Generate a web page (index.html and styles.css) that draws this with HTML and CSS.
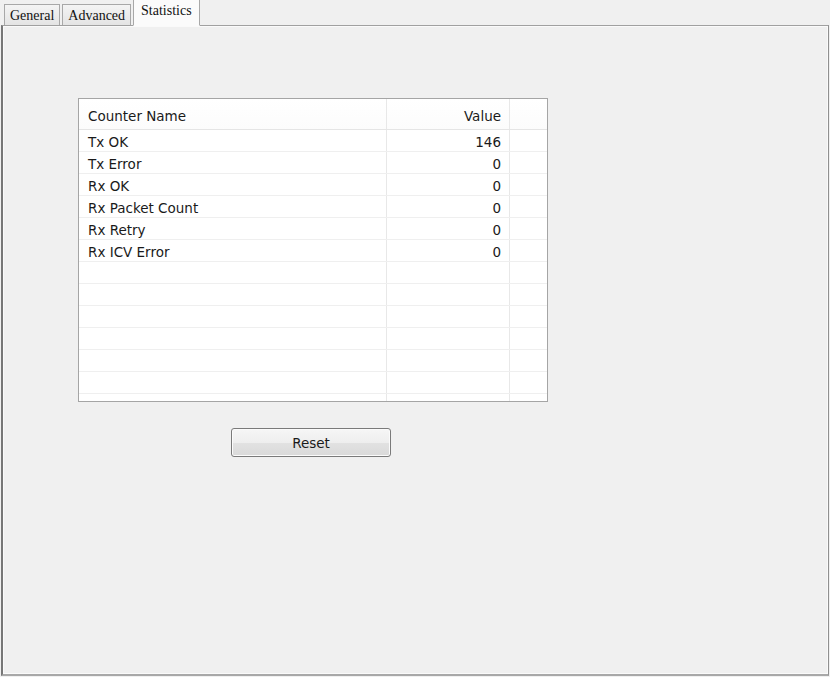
FILE: index.html
```html
<!DOCTYPE html>
<html>
<head>
<meta charset="utf-8">
<link rel="stylesheet" href="styles.css">
</head>
<body>
<div class="tabs">
  <div class="tab">General</div>
  <div class="tab">Advanced</div>
  <div class="tab active">Statistics</div>
</div>
<div class="panel">
  <div class="list">
    <div class="head">
      <div class="c1">Counter Name</div>
      <div class="c2">Value</div>
      <div class="c3"></div>
    </div>
    <div class="rows">
      <div class="row"><div class="c1">Tx OK</div><div class="c2">146</div><div class="c3"></div></div>
      <div class="row"><div class="c1">Tx Error</div><div class="c2">0</div><div class="c3"></div></div>
      <div class="row"><div class="c1">Rx OK</div><div class="c2">0</div><div class="c3"></div></div>
      <div class="row"><div class="c1">Rx Packet Count</div><div class="c2">0</div><div class="c3"></div></div>
      <div class="row"><div class="c1">Rx Retry</div><div class="c2">0</div><div class="c3"></div></div>
      <div class="row"><div class="c1">Rx ICV Error</div><div class="c2">0</div><div class="c3"></div></div>
      <div class="row"><div class="c1"></div><div class="c2"></div><div class="c3"></div></div>
      <div class="row"><div class="c1"></div><div class="c2"></div><div class="c3"></div></div>
      <div class="row"><div class="c1"></div><div class="c2"></div><div class="c3"></div></div>
      <div class="row"><div class="c1"></div><div class="c2"></div><div class="c3"></div></div>
      <div class="row"><div class="c1"></div><div class="c2"></div><div class="c3"></div></div>
      <div class="row"><div class="c1"></div><div class="c2"></div><div class="c3"></div></div>
      <div class="row"><div class="c1"></div><div class="c2"></div><div class="c3"></div></div>
    </div>
  </div>
  <div class="actions">
    <button class="btn">Reset</button>
  </div>
</div>
</body>
</html>
```
FILE: styles.css
```css
html, body {
  margin: 0;
  padding: 0;
}
body {
  width: 830px;
  height: 677px;
  background: #f0f0f0;
  overflow: hidden;
  font-family: "DejaVu Sans", sans-serif;
}
.tabs {
  display: flex;
  align-items: flex-end;
  height: 25px;
  padding-left: 4px;
  gap: 2px;
  position: relative;
  z-index: 2;
}
.tab {
  height: 20px;
  line-height: 21px;
  padding: 0 5px;
  border: 1px solid #a8a8a8;
  border-bottom: none;
  background: linear-gradient(#f4f4f4, #e4e4e4);
  font-family: "Liberation Serif", serif;
  font-size: 14px;
  color: #111;
}
.tab.active {
  height: 25px;
  line-height: 22px;
  padding: 0 7px;
  background: #fbfbfb;
  margin-bottom: -1px;
  border-bottom: 1px solid #fbfbfb;
}
.panel {
  margin: 0 1px 0 1px;
  border: 1px solid #a0a0a0;
  border-left: 2px solid #777;
  border-right: 1px solid #909090;
  border-bottom: 2px solid #a8a8a8;
  box-shadow: inset 1px 1px 0 #fafafa, inset -1px -1px 0 #fafafa;
  background: #f0f0f0;
  padding: 72px 0 0 75px;
  box-sizing: border-box;
  height: 651px;
}
.list {
  width: 470px;
  height: 304px;
  box-sizing: border-box;
  border: 1px solid #a5a5a5;
  background: #fff;
  overflow: hidden;
  font-size: 13.5px;
  color: #1a1a1a;
}
.head {
  display: flex;
  height: 31px;
  box-sizing: border-box;
  border-bottom: 1px solid #e5e5e5;
  background: linear-gradient(#ffffff, #fcfcfc);
}
.head > div {
  line-height: 34px;
}
.row {
  display: flex;
  height: 22px;
  box-sizing: border-box;
  border-bottom: 1px solid #efefef;
}
.row > div {
  line-height: 24px;
}
.c1 {
  width: 308px;
  flex: none;
  padding-left: 9px;
  box-sizing: border-box;
  border-right: 1px solid #e8e8e8;
}
.c2 {
  width: 123px;
  flex: none;
  padding-right: 8px;
  text-align: right;
  box-sizing: border-box;
  border-right: 1px solid #e8e8e8;
}
.c3 {
  flex: 1;
}
.actions {
  padding: 26px 0 0 153px;
}
.btn {
  width: 160px;
  height: 29px;
  border: 1px solid #7a7a7a;
  border-radius: 3px;
  background: linear-gradient(#f6f6f6 0%, #eeeeee 50%, #e2e2e2 51%, #d9d9d9 100%);
  box-shadow: inset 0 0 0 1px #fbfbfb;
  font-family: "DejaVu Sans", sans-serif;
  font-size: 13.5px;
  color: #1a1a1a;
  padding: 0;
}
```
